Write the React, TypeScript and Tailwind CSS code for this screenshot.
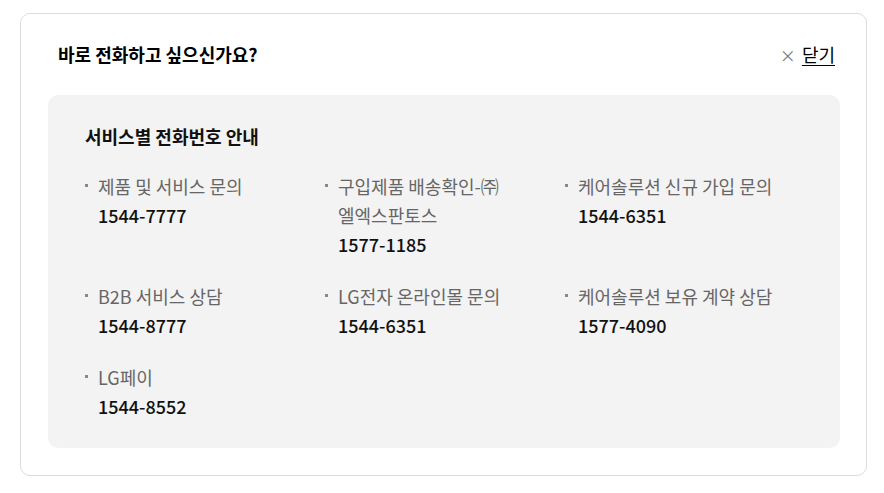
const items = [
  { label: ["제품 및 서비스 문의"], phone: "1544-7777" },
  { label: ["구입제품 배송확인-㈜", "엘엑스판토스"], phone: "1577-1185" },
  { label: ["케어솔루션 신규 가입 문의"], phone: "1544-6351" },
  { label: ["B2B 서비스 상담"], phone: "1544-8777" },
  { label: ["LG전자 온라인몰 문의"], phone: "1544-6351" },
  { label: ["케어솔루션 보유 계약 상담"], phone: "1577-4090" },
  { label: ["LG페이"], phone: "1544-8552" },
];

export default function App() {
  return (
    <div className="w-[884px] h-[493px] bg-white pt-[13px] pl-[20px] font-['Noto_Sans_CJK_KR','Noto_Sans',sans-serif]">
      <div className="w-[847px] h-[463px] rounded-[10px] border border-[#dcdcdc] px-[27px]">
        <div className="h-[81px] flex items-center justify-between pl-[10px] pr-[4px]">
          <h1 className="text-[18px] font-bold text-black">바로 전화하고 싶으신가요?</h1>
          <button className="flex items-center gap-[6px] text-[18px] text-black">
            <span className="text-[#777] text-[16px] leading-none">×</span>
            <span className="underline underline-offset-[3px]">닫기</span>
          </button>
        </div>
        <div className="w-[792px] rounded-[10px] bg-[#f3f3f3] pl-[37px] pt-[29px] pb-[27px]">
          <h2 className="text-[18px] leading-[24px] font-bold text-[#111]">서비스별 전화번호 안내</h2>
          <div className="mt-[24px] grid grid-cols-[240px_240px_240px] gap-y-[23px]">
            {items.map((it, i) => (
              <div key={i} className="relative pl-[13px] text-[18px] leading-[29px]">
                <span className="absolute left-0 top-[12px] w-[3px] h-[3px] bg-[#888]" />
                {it.label.map((l) => (
                  <div key={l} className="text-[#666]">{l}</div>
                ))}
                <div className="text-[#111] font-medium">{it.phone}</div>
              </div>
            ))}
          </div>
        </div>
      </div>
    </div>
  );
}
